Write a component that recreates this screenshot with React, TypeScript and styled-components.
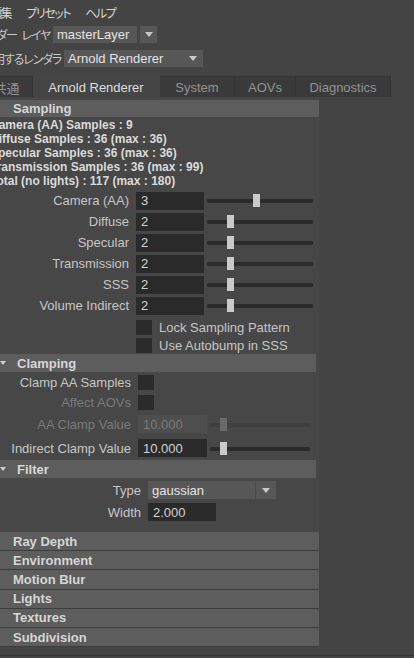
import React from "react";
import styled, { createGlobalStyle } from "styled-components";

const GlobalStyle = createGlobalStyle`
  html, body {
    margin: 0;
    background: #444444;
    overflow: hidden;
  }
  body {
    font-family: "Liberation Sans", Arial, sans-serif;
    font-size: 13px;
    color: #c6c6c6;
  }
`;

const jpFont = `"Noto Sans CJK JP", "Liberation Sans", sans-serif`;

const Window = styled.div`
  width: 414px;
  height: 658px;
  display: flex;
  flex-direction: column;
  background: #444444;
  overflow: hidden;
`;

/* ---------- menu + renderer pickers ---------- */

const MenuBar = styled.div`
  display: flex;
  align-items: center;
  gap: 15px;
  height: 24px;
  margin-left: -10px;
  font-family: ${jpFont};
  font-feature-settings: "palt";
  font-size: 12px;
  letter-spacing: -1.4px;
  color: #d4d4d4;
`;

const PickerRow = styled.div<{ $top: number }>`
  display: flex;
  align-items: center;
  height: 17px;
  margin-top: ${(p) => p.$top}px;
`;

const PickerLabel = styled.div<{ $w: number }>`
  width: ${(p) => p.$w}px;
  flex-shrink: 0;
  display: flex;
  justify-content: flex-end;
  white-space: nowrap;
  margin-right: 3px;
  font-family: ${jpFont};
  font-feature-settings: "palt";
  font-size: 12px;
  letter-spacing: -1.2px;
  color: #c8c8c8;
`;

const Combo = styled.div<{ $w: number; $h?: number }>`
  width: ${(p) => p.$w}px;
  height: ${(p) => p.$h ?? 17}px;
  box-sizing: border-box;
  display: flex;
  align-items: center;
  padding-left: 4px;
  background: #575757;
  color: #e4e4e4;
  white-space: nowrap;
`;

const ArrowCell = styled.div<{ $w: number; $split?: boolean }>`
  width: ${(p) => p.$w}px;
  height: 100%;
  margin-left: auto;
  display: flex;
  align-items: center;
  justify-content: center;
  box-sizing: border-box;
  border-left: ${(p) => (p.$split ? "1px solid #4a4a4a" : "none")};
`;

const ArrowButton = styled.div`
  width: 17px;
  height: 17px;
  margin-left: 3px;
  display: flex;
  align-items: center;
  justify-content: center;
  background: #575757;
`;

const DownArrow = () => (
  <svg width="8" height="5" viewBox="0 0 8 5">
    <path d="M0 0 H8 L4 5 Z" fill="#c9c9c9" />
  </svg>
);

/* ---------- tabs ---------- */

const TabBar = styled.div`
  display: flex;
  height: 21px;
  margin-top: 9px;
  margin-left: -19px;
`;

const Tab = styled.div<{ $w: number; $active?: boolean }>`
  width: ${(p) => p.$w}px;
  box-sizing: border-box;
  display: flex;
  align-items: center;
  justify-content: center;
  white-space: nowrap;
  background: ${(p) => (p.$active ? "#454545" : "#3a3a3a")};
  color: ${(p) => (p.$active ? "#dedede" : "#939393")};
  border-right: 1px solid ${(p) => (p.$active ? "#454545" : "#333333")};
  border-top: 1px solid ${(p) => (p.$active ? "#454545" : "#363636")};
  font-family: "Liberation Sans", ${jpFont};
`;

/* ---------- attribute panel ---------- */

const Panel = styled.div`
  width: 327px;
  height: 550px;
  margin-left: -8px;
  padding-top: 3px;
  box-sizing: border-box;
  background: #474747;
  display: flex;
  flex-direction: column;
  overflow: hidden;
`;

const Frame = styled.div<{ $nested?: boolean; $padBottom?: number }>`
  display: flex;
  flex-direction: column;
  margin: ${(p) => (p.$nested ? "0 3px 0 8px" : "0")};
  padding-bottom: ${(p) => p.$padBottom ?? 0}px;
`;

const FrameHeader = styled.div<{ $h: number; $gap: number }>`
  display: flex;
  align-items: center;
  gap: ${(p) => p.$gap}px;
  height: ${(p) => p.$h}px;
  flex-shrink: 0;
  background: #5d5d5d;
  font-weight: bold;
  color: #d6d6d6;
  white-space: nowrap;
`;

const Twisty = ({ open }: { open: boolean }) => (
  <svg width="6" height="6" viewBox="0 0 6 6">
    {open ? (
      <path d="M0 1 H6 L3 5 Z" fill="#d0d0d0" />
    ) : (
      <path d="M1 0 V6 L5 3 Z" fill="#d0d0d0" />
    )}
  </svg>
);

const InfoBlock = styled.div`
  margin: 1px 0 0 -2px;
  font-weight: bold;
  font-size: 12px;
  line-height: 14px;
  color: #dadada;
  white-space: nowrap;
`;

const Rows = styled.div<{ $top: number }>`
  display: flex;
  flex-direction: column;
  margin-top: ${(p) => p.$top}px;
`;

const PropRow = styled.div<{ $h: number }>`
  display: flex;
  align-items: center;
  height: ${(p) => p.$h}px;
  flex-shrink: 0;
`;

const PropLabel = styled.div<{ $w: number; $dim?: boolean }>`
  width: ${(p) => p.$w}px;
  flex-shrink: 0;
  display: flex;
  justify-content: flex-end;
  margin-right: 7px;
  white-space: nowrap;
  color: ${(p) => (p.$dim ? "#7a7a7a" : "#c6c6c6")};
`;

const Field = styled.div<{ $w: number; $dim?: boolean }>`
  width: ${(p) => p.$w}px;
  height: 18px;
  flex-shrink: 0;
  box-sizing: border-box;
  padding-left: 5px;
  display: flex;
  align-items: center;
  background: ${(p) => (p.$dim ? "#4e4e4e" : "#2a2a2a")};
  color: ${(p) => (p.$dim ? "#7b7b7b" : "#d2d2d2")};
`;

const SliderBox = styled.div<{ $w: number }>`
  position: relative;
  width: ${(p) => p.$w}px;
  height: 13px;
  margin-left: 3px;
  flex-shrink: 0;
`;

const Track = styled.div<{ $dim?: boolean }>`
  position: absolute;
  left: 0;
  right: 0;
  top: 5px;
  height: 4px;
  border-radius: 1px;
  background: ${(p) => (p.$dim ? "#3f3f3f" : "#2b2b2b")};
`;

const Thumb = styled.div<{ $x: number; $dim?: boolean }>`
  position: absolute;
  top: 0;
  left: ${(p) => p.$x}px;
  width: 7px;
  height: 13px;
  background: ${(p) => (p.$dim ? "#6a6a6a" : "#cacaca")};
`;

const CheckBox = styled.div`
  width: 16px;
  height: 15px;
  flex-shrink: 0;
  background: #2b2b2b;
`;

const CheckText = styled.span`
  margin-left: 7px;
  white-space: nowrap;
  color: #c6c6c6;
`;

const CollapsedList = styled.div`
  display: flex;
  flex-direction: column;
`;

const CollapsedHeader = styled(FrameHeader)`
  border-bottom: 1.2px solid #3d3d3d;
  box-sizing: border-box;
`;

const BottomEdge = styled.div`
  margin-top: auto;
  height: 2px;
  border-top: 1px solid #333333;
`;

/* ---------- data ---------- */

const tabs = [
  { name: "共通", w: 52 },
  { name: "Arnold Renderer", w: 127, active: true },
  { name: "System", w: 75 },
  { name: "AOVs", w: 61 },
  { name: "Diagnostics", w: 95 },
];

const sampleInfo = [
  "Camera (AA) Samples : 9",
  "Diffuse Samples : 36 (max : 36)",
  "Specular Samples : 36 (max : 36)",
  "Transmission Samples : 36 (max : 99)",
  "Total (no lights) : 117 (max : 180)",
];

const samplingRows = [
  { label: "Camera (AA)", value: "3", thumb: 46 },
  { label: "Diffuse", value: "2", thumb: 20 },
  { label: "Specular", value: "2", thumb: 20 },
  { label: "Transmission", value: "2", thumb: 20 },
  { label: "SSS", value: "2", thumb: 20 },
  { label: "Volume Indirect", value: "2", thumb: 20 },
];

const collapsed = ["Ray Depth", "Environment", "Motion Blur", "Lights", "Textures", "Subdivision"];

const Slider = ({ w, x, dim }: { w: number; x: number; dim?: boolean }) => (
  <SliderBox $w={w}>
    <Track $dim={dim} />
    <Thumb $x={x} $dim={dim} />
  </SliderBox>
);

export default function App() {
  return (
    <Window>
      <GlobalStyle />
      <MenuBar>
        <span>編集</span>
        <span>プリセット</span>
        <span>ヘルプ</span>
      </MenuBar>

      <PickerRow $top={2}>
        <PickerLabel $w={50}>{"レンダー\u2002レイヤ"}</PickerLabel>
        <Combo $w={84}>masterLayer</Combo>
        <ArrowButton>
          <DownArrow />
        </ArrowButton>
      </PickerRow>

      <PickerRow $top={7}>
        <PickerLabel $w={61}>使用するレンダラ</PickerLabel>
        <Combo $w={139}>
          Arnold Renderer
          <ArrowCell $w={20}>
            <DownArrow />
          </ArrowCell>
        </Combo>
      </PickerRow>

      <TabBar>
        {tabs.map((t) => (
          <Tab key={t.name} $w={t.w} $active={t.active}>
            {t.name}
          </Tab>
        ))}
      </TabBar>

      <Panel>
        <Frame $padBottom={9}>
          <FrameHeader $h={17} $gap={15}>
            <Twisty open />
            Sampling
          </FrameHeader>
          <InfoBlock>
            {sampleInfo.map((l) => (
              <div key={l}>{l}</div>
            ))}
          </InfoBlock>

          <Rows $top={2}>
            {samplingRows.map((r) => (
              <PropRow key={r.label} $h={21}>
                <PropLabel $w={137}>{r.label}</PropLabel>
                <Field $w={68}>{r.value}</Field>
                <Slider w={106} x={r.thumb} />
              </PropRow>
            ))}
          </Rows>

          <Rows $top={2}>
            <PropRow $h={18}>
              <PropLabel $w={137} />
              <CheckBox />
              <CheckText>Lock Sampling Pattern</CheckText>
            </PropRow>
            <PropRow $h={18}>
              <PropLabel $w={137} />
              <CheckBox />
              <CheckText>Use Autobump in SSS</CheckText>
            </PropRow>
          </Rows>

          <Frame $nested>
            <FrameHeader $h={18} $gap={11}>
              <Twisty open />
              Clamping
            </FrameHeader>
            <PropRow $h={20}>
              <PropLabel $w={131}>Clamp AA Samples</PropLabel>
              <CheckBox />
            </PropRow>
            <PropRow $h={20}>
              <PropLabel $w={131} $dim>
                Affect AOVs
              </PropLabel>
              <CheckBox />
            </PropRow>
            <PropRow $h={24}>
              <PropLabel $w={131} $dim>
                AA Clamp Value
              </PropLabel>
              <Field $w={69} $dim>
                10.000
              </Field>
              <Slider w={100} x={10} dim />
            </PropRow>
            <PropRow $h={24}>
              <PropLabel $w={131}>Indirect Clamp Value</PropLabel>
              <Field $w={69}>10.000</Field>
              <Slider w={100} x={10} />
            </PropRow>
          </Frame>

          <Frame $nested>
            <FrameHeader $h={18} $gap={11}>
              <Twisty open />
              Filter
            </FrameHeader>
            <Rows $top={1}>
              <PropRow $h={22}>
                <PropLabel $w={141}>Type</PropLabel>
                <Combo $w={128} $h={18}>
                  gaussian
                  <ArrowCell $w={21} $split>
                    <DownArrow />
                  </ArrowCell>
                </Combo>
              </PropRow>
              <PropRow $h={22}>
                <PropLabel $w={141}>Width</PropLabel>
                <Field $w={68}>2.000</Field>
              </PropRow>
            </Rows>
          </Frame>
        </Frame>

        <CollapsedList>
          {collapsed.map((name) => (
            <CollapsedHeader key={name} $h={19.2} $gap={15}>
              <Twisty open={false} />
              {name}
            </CollapsedHeader>
          ))}
        </CollapsedList>
      </Panel>
      <BottomEdge />
    </Window>
  );
}
